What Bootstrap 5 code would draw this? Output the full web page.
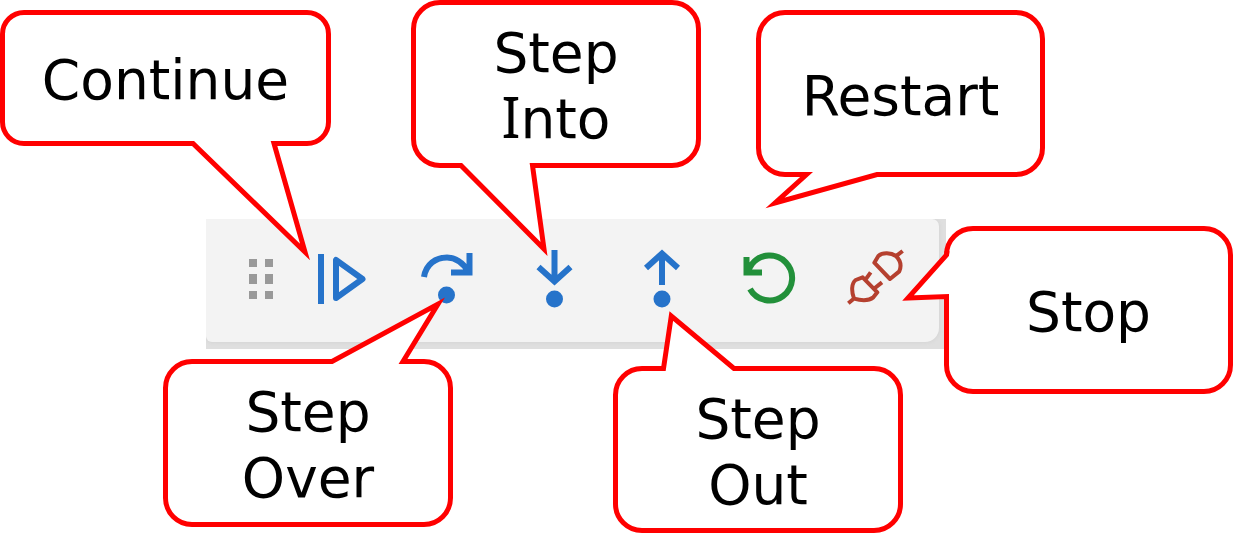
<!DOCTYPE html>
<html lang="en">
<head>
<meta charset="utf-8">
<meta name="viewport" content="width=device-width, initial-scale=1">
<title>Debug toolbar</title>
<link href="https://cdn.jsdelivr.net/npm/bootstrap@5.3.0/dist/css/bootstrap.min.css" rel="stylesheet">
<style>
  body { font-family: "DejaVu Sans", Verdana, sans-serif; color: #000; }
  .diagram { grid-template-columns: max-content max-content; grid-template-rows: 219px auto auto; }
  .top-notes { grid-column: 1 / 3; }
  .gap-wide { margin-left: 80px; }
  .gap-narrow { margin-left: 55px; }
  .side-note { grid-column: 2; grid-row: 2 / 4; margin-top: 7px; }
  .bottom-notes { grid-column: 1; gap: 160px; margin-left: 163px; margin-top: 10px; }

  /* Speech bubbles; each tail is drawn over the toolbar */
  .callout { width: 290px; height: 168px; padding-top: 4px; border: 5px solid #f00; border-radius: 29px;
    background: #fff; font-size: 55px; line-height: 66px; z-index: 2; }
  .callout-wide { width: 331px; height: 136px; border-radius: 24px; }
  .callout-slim { width: 289px; }
  .callout-low { height: 167px; }
  .lowered { margin-top: 10px; }
  .lowered-sm { margin-top: 7px; }
  .bar-i { font-family: "Noto Sans", sans-serif; font-size: 56px; line-height: 1; }
  .tail { top: -5px; left: -5px; width: 100%; height: 100%; overflow: visible; pointer-events: none; }
  .tail .gap-fill { fill: #fff; }
  .tail .edge { fill: #fff; stroke: #f00; stroke-width: 5; stroke-miterlimit: 12; }

  .toolbar-shot { width: 740px; height: 130px; margin-left: 206px; margin-right: -2px; padding: 0 7px 7px 0; background: #dfdfdf; }
  .toolbar-panel { padding: 28px 0 0 40px; background: #f3f3f3; border-radius: 0 7px 14px 6px; box-shadow: 0 0 4px #d0d0d0; }
  .tool { width: 107px; height: 64px; color: #2673ca; }
  .tool svg { display: block; width: 107px; height: 64px; fill: none; stroke: currentColor; stroke-width: 6; }
  .tool .dot { fill: currentColor; stroke: none; }
  .grip { width: 30px; height: 64px; margin-right: 12px; }
  .tool-green { color: #22903a; }
  .tool-red { color: #b5402f; }
</style>
</head>
<body>
<main class="d-flex justify-content-center">
  <div class="diagram d-grid align-items-start">

    <div class="top-notes d-flex align-items-start">
      <div class="callout callout-wide lowered position-relative d-flex align-items-center justify-content-center text-center">
        <svg class="tail position-absolute" aria-hidden="true"><path class="gap-fill" d="M193 130H274V137H193Z"/><path class="edge" d="M182 133.500H193L305 242L274 133.500H285"/></svg>
        <span class="position-relative">Continue</span>
      </div>
      <div class="callout gap-wide position-relative d-flex align-items-center justify-content-center text-center">
        <svg class="tail position-absolute" aria-hidden="true"><path class="gap-fill" d="M50 162H121V169H50Z"/><path class="edge" d="M42 165.500H50L133 249L121.500 165.500H132"/></svg>
        <span class="position-relative">Step<br><span class="bar-i">I</span>nto</span>
      </div>
      <div class="callout callout-slim callout-low gap-narrow lowered position-relative d-flex align-items-center justify-content-center text-center">
        <svg class="tail position-absolute" aria-hidden="true"><path class="gap-fill" d="M50 161H121V168H50Z"/><path class="edge" d="M40 164.500H50.500L19 193L121 164.500H132"/></svg>
        <span class="position-relative">Restart</span>
      </div>
    </div>

    <div class="toolbar-shot overflow-hidden">
      <div class="toolbar-panel h-100 d-flex align-items-start" role="toolbar" aria-label="Debug">
        <svg class="grip" viewBox="0 0 30 64" fill="#999" aria-hidden="true"><path d="M3 12h8v8H3zM19 12h8v8h-8zM3 27h8v10H3zM19 27h8v10h-8zM3 44h8v8H3zM19 44h8v8h-8z"/></svg>
        <button class="tool btn border-0 p-0" type="button" aria-label="Continue"><svg viewBox="0 0 107 64"><path d="M33 7V57M48 13V51L74.500 32Z" stroke-linejoin="round"/></svg></button>
        <button class="tool btn border-0 p-0" type="button" aria-label="Step over"><svg viewBox="0 0 107 64"><path d="M29 30C31 17 41 10.500 52 10.500C61 10.500 68 16 74 25M74.500 6V25.500H56"/><circle class="dot" cx="51.500" cy="48" r="8.500"/></svg></button>
        <button class="tool btn border-0 p-0" type="button" aria-label="Step into"><svg viewBox="0 0 107 64"><path d="M52.500 3V34M36.500 20L52.500 34.500L68.500 20"/><circle class="dot" cx="52.500" cy="52" r="8.500"/></svg></button>
        <button class="tool btn border-0 p-0" type="button" aria-label="Step out"><svg viewBox="0 0 107 64"><path d="M53 38V7M37 21L53 6.500L69 21"/><circle class="dot" cx="53" cy="52" r="8.500"/></svg></button>
        <button class="tool tool-green btn border-0 p-0" type="button" aria-label="Restart"><svg viewBox="0 0 107 64"><path d="M34 42A22.500 22.500 0 1 0 36 17L31 25M30.500 10V25.500H46"/></svg></button>
        <button class="tool tool-red btn border-0 p-0" type="button" aria-label="Stop"><svg viewBox="0 0 107 64"><g transform="translate(17 -7) scale(.3333)" stroke-width="12"><path stroke-linejoin="round" d="M103 68L150 117L178 94C186 75 180 60 168 48C153 38 128 36 115 48ZM166 50L188 33M68 112L112 157L100 172C85 184 60 181 42 176C34 155 34 130 47 120ZM77 118L92 97M101 147L126 127M43 175L25 190"/></g></svg></button>
      </div>
    </div>

    <div class="side-note">
      <div class="callout callout-slim position-relative d-flex align-items-center justify-content-center text-center">
        <svg class="tail position-absolute" aria-hidden="true"><path class="gap-fill" d="M-1 30H6V70H-1Z"/><path class="edge" d="M3 25L2.500 29L-36 72L2.500 70.500V84"/></svg>
        <span class="position-relative">Stop</span>
      </div>
    </div>

    <div class="bottom-notes d-flex align-items-start">
      <div class="callout position-relative d-flex align-items-center justify-content-center text-center">
        <svg class="tail position-absolute" aria-hidden="true"><path class="gap-fill" d="M169 -1H240V6H169Z"/><path class="edge" d="M158 2.500H169L275 -55L240 2.500H250"/></svg>
        <span class="position-relative">Step<br>Over</span>
      </div>
      <div class="callout callout-low lowered-sm position-relative d-flex align-items-center justify-content-center text-center">
        <svg class="tail position-absolute" aria-hidden="true"><path class="gap-fill" d="M51 -1H121V6H51Z"/><path class="edge" d="M40 2.500H50.500L58.300 -50L121 2.500H132"/></svg>
        <span class="position-relative">Step<br>Out</span>
      </div>
    </div>
  </div>
</main>
<script src="https://cdn.jsdelivr.net/npm/bootstrap@5.3.0/dist/js/bootstrap.bundle.min.js"></script>
</body>
</html>
